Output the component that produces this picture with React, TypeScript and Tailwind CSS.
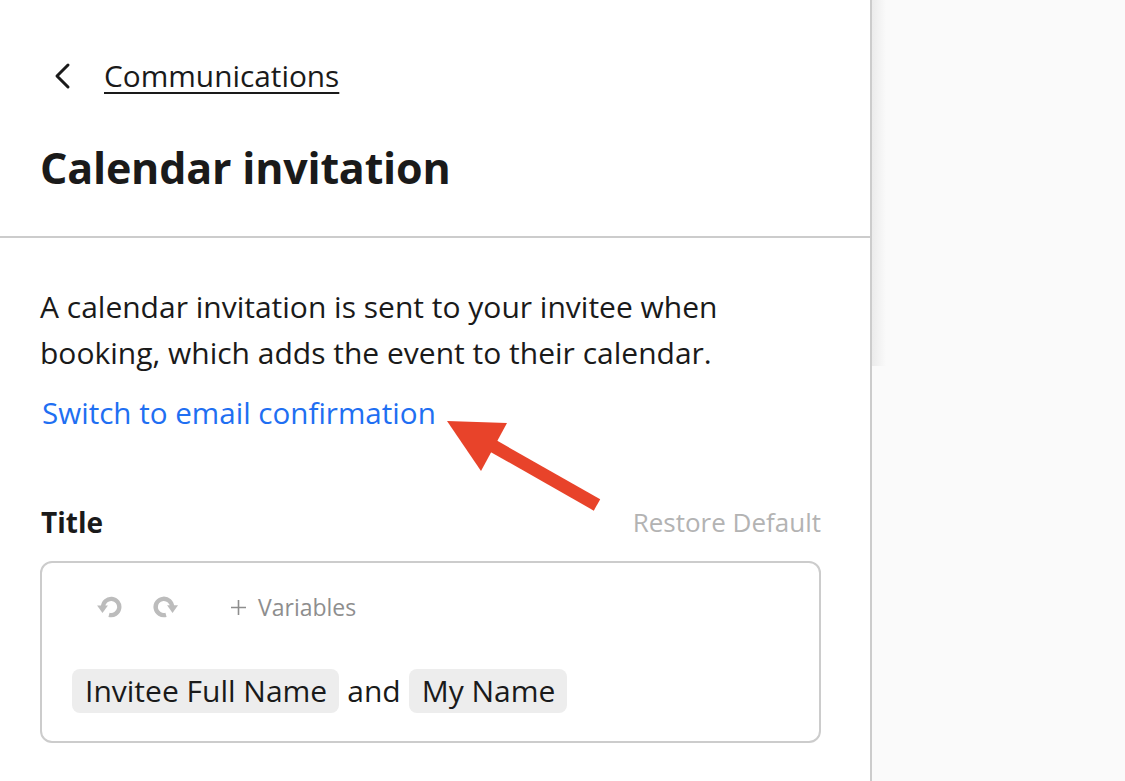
export default function App() {
  return (
    <div className="relative flex h-[781px] w-[1125px] overflow-hidden bg-[#fafafa] font-['Open_Sans',sans-serif] text-[#1a1a1a]">
      <div className="flex w-[872px] shrink-0 flex-col border-r-2 border-[#cccccc] bg-white">
        {/* header */}
        <div className="flex h-[238px] flex-col border-b-2 border-[#cccccc] px-10">
          <div className="mt-[56px] flex h-[40px] items-center">
            <svg width="30" height="30" viewBox="0 0 30 30" className="ml-[8px]">
              <polyline points="20,4 9,15 20,26" fill="none" stroke="#1a1a1a" strokeWidth="3" strokeLinecap="round" strokeLinejoin="round" />
            </svg>
            <a className="ml-[26px] text-[29.8px] leading-[40px] underline underline-offset-[5px] decoration-2">Communications</a>
          </div>
          <h1 className="mt-[48px] text-[43px] font-bold leading-[48px] tracking-[-0.2px]">Calendar invitation</h1>
        </div>

        {/* body */}
        <div className="flex flex-col px-10 pt-[46px]">
          <p className="text-[30px] leading-[46px] text-[#1a1a1a]">
            A calendar invitation is sent to your invitee when
            <br />
            booking, which adds the event to their calendar.
          </p>
          <a className="mt-[21px] ml-[2px] text-[29.6px] leading-[32px] text-[#1f6ff2]">Switch to email confirmation</a>

          <div className="mt-[77px] flex w-[781px] items-end justify-between">
            <span className="ml-[1px] text-[28px] font-bold leading-[32px]">Title</span>
            <span className="text-[26px] leading-[32px] text-[#b3b3b3]">Restore Default</span>
          </div>

          <div className="mt-[23px] flex h-[182px] w-[781px] flex-col rounded-[12px] border-2 border-[#cccccc] px-[30px]">
            <div className="mt-[26px] flex h-[36px] items-center">
              <svg width="26" height="24" viewBox="0 0 24 22" className="ml-[24px]">
                <path d="M6.5 11 A7.5 7.5 0 1 1 12 18.2" fill="none" stroke="#bcbcbc" strokeWidth="4" />
                <polygon points="1,9.5 11,9.5 6,16.5" fill="#bcbcbc" />
              </svg>
              <svg width="28" height="24" viewBox="0 0 24 22" className="ml-[30px]">
                <path d="M17.5 11 A7.5 7.5 0 1 0 12 18.2" fill="none" stroke="#bcbcbc" strokeWidth="4" />
                <polygon points="23,9.5 13,9.5 18,16.5" fill="#bcbcbc" />
              </svg>
              <svg width="15" height="15" viewBox="0 0 15 15" className="ml-[51px]">
                <path d="M7.5 0 V15 M0 7.5 H15" stroke="#8e8e8e" strokeWidth="1.6" />
              </svg>
              <span className="ml-[12px] text-[23px] text-[#8e8e8e]">Variables</span>
            </div>
            <div className="mt-[44px] flex items-center text-[30px]">
              <span className="rounded-[8px] bg-[#ededed] pl-[13px] pr-[12px] py-[4px] leading-[36px]">Invitee Full Name</span>
              <span className="mx-[8px] leading-[36px]">and</span>
              <span className="rounded-[8px] bg-[#ededed] pl-[13px] pr-[12px] py-[4px] leading-[36px]">My Name</span>
            </div>
          </div>
        </div>
      </div>

      <div className="relative flex-1">
        <div className="absolute left-0 top-0 h-[366px] w-[14px] bg-gradient-to-r from-[#ebebeb] to-transparent" />
      </div>

      {/* annotation arrow */}
      <svg className="pointer-events-none absolute left-0 top-0" width="1125" height="781">
        <line x1="597" y1="505" x2="488" y2="443" stroke="#e8432a" strokeWidth="13" />
        <polygon points="447,421 507,423 481,471" fill="#e8432a" />
      </svg>
    </div>
  );
}
